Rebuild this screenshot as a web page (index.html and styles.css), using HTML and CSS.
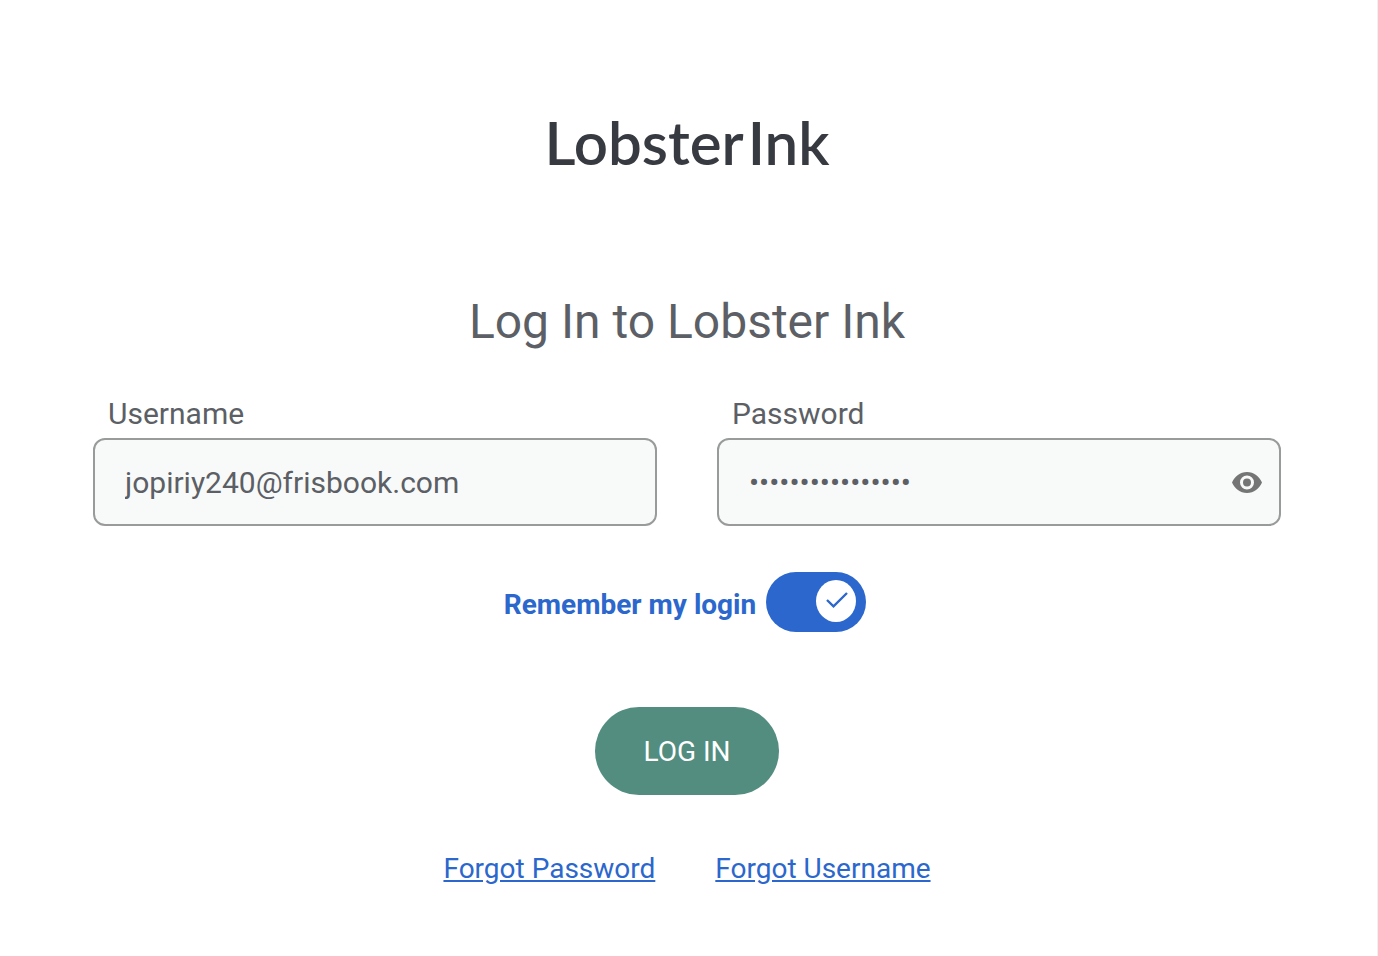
FILE: index.html
```html
<!DOCTYPE html>
<html lang="en">

<head>
    <meta charset="UTF-8">
    <meta name="viewport" content="width=device-width, initial-scale=1.0">
    <title>Lobster Ink</title>
    <link rel="stylesheet" href="styles.css">
</head>

<body>
    <main class="login">
        <div class="logo">
            <span>Lobster</span>
            <span>Ink</span>
        </div>
        <h1>Log In to Lobster Ink</h1>
        <form method="post">
            <div class="fields">
                <div class="field">
                    <label for="username">Username</label>
                    <input type="text" id="username" name="username" value="jopiriy240@frisbook.com">
                </div>
                <div class="field">
                    <label for="password">Password</label>
                    <div class="password">
                        <input type="password" id="password" name="password" value="abcdefghijklmnop">
                        <button type="button" class="reveal" aria-label="Show password">
                            <svg viewBox="0 0 30 21" width="30" height="21">
                                <path fill="#757575" fill-rule="evenodd" d="M15 0C8 0 2.800 4.600 0 10.500C2.800 16.400 8 21 15 21S27.200 16.400 30 10.500C27.200 4.600 22 0 15 0ZM15 17.500a7 7 0 1 1 0-14a7 7 0 0 1 0 14ZM15 6.500a4 4 0 1 0 0 8a4 4 0 0 0 0-8Z"/>
                            </svg>
                        </button>
                    </div>
                </div>
            </div>
            <div class="remember">
                <label for="remember">Remember my login</label>
                <span class="toggle">
                    <input type="checkbox" id="remember" name="remember" checked>
                    <svg class="tick" viewBox="0 0 22 16" width="22" height="16">
                        <path fill="none" stroke="#2b67cc" stroke-width="2.400" d="M1 8L7.500 14.300L21 1"/>
                    </svg>
                </span>
            </div>
            <button type="submit" class="submit">LOG IN</button>
        </form>
        <nav class="links">
            <a href="#">Forgot Password</a>
            <a href="#">Forgot Username</a>
        </nav>
    </main>
</body>

</html>
```
FILE: styles.css
```css
* {
    box-sizing: border-box;
}

body {
    margin: 0;
    min-height: 100vh;
    border-right: 1px solid #f0f0f0;
    background: #fff;
    color: #5c5f65;
    font-family: Roboto, "Liberation Sans", sans-serif;
}

.login {
    padding: 102px 96px 48px 93px;
    text-align: center;
}

.logo {
    display: flex;
    justify-content: center;
    gap: 4px;
    color: #373a40;
    font-family: Lato, sans-serif;
    font-size: 60px;
    font-weight: 600;
    line-height: 80px;
}

h1 {
    margin: 108px 0 0;
    font-size: 48px;
    font-weight: 400;
    line-height: 64px;
}

.fields {
    display: flex;
    gap: 60px;
    margin-top: 40px;
}

.field {
    flex: 1;
    text-align: left;
}

.field label {
    display: block;
    margin: 0 0 4px 15px;
    font-size: 30px;
    line-height: 40px;
}

.field input {
    display: block;
    width: 100%;
    height: 88px;
    padding: 0 30px;
    border: 2px solid #999b9b;
    border-radius: 12px;
    background: #f8faf9;
    color: #5c5f65;
    font-family: inherit;
    font-size: 30px;
}

.password {
    position: relative;
}

.password input {
    padding-right: 68px;
}

.reveal {
    position: absolute;
    top: 24px;
    right: 14px;
    width: 40px;
    height: 40px;
    padding: 0;
    border: 0;
    background: none;
    cursor: pointer;
}

.reveal svg {
    display: block;
    margin: auto;
}

.remember {
    display: flex;
    justify-content: center;
    align-items: flex-start;
    gap: 10px;
    margin-top: 46px;
    padding-right: 4px;
    color: #2b67cc;
    font-size: 28px;
    font-weight: 700;
    line-height: 66px;
}

.toggle {
    position: relative;
    height: 60px;
}

.toggle input {
    display: block;
    width: 100px;
    height: 60px;
    margin: 0;
    padding: 8px 10px;
    border-radius: 30px;
    background: #a0a3a6;
    appearance: none;
    cursor: pointer;
}

.toggle input::before {
    content: "";
    display: block;
    width: 40px;
    height: 42px;
    border-radius: 50%;
    background: #fff;
}

.toggle input:checked {
    background: #2b67cc;
}

.toggle input:checked::before {
    margin-left: auto;
}

.tick {
    position: absolute;
    top: 20px;
    right: 18px;
    pointer-events: none;
}

.toggle input:not(:checked) + .tick {
    display: none;
}

.submit {
    height: 88px;
    margin-top: 69px;
    padding: 0 48px;
    border: 0;
    border-radius: 44px;
    background: #528d80;
    color: #fff;
    font-family: inherit;
    font-size: 28px;
    cursor: pointer;
}

.links {
    display: flex;
    justify-content: center;
    gap: 60px;
    margin-top: 54px;
    font-size: 28px;
    line-height: 40px;
}

.links a {
    color: #2b67cc;
}
```
